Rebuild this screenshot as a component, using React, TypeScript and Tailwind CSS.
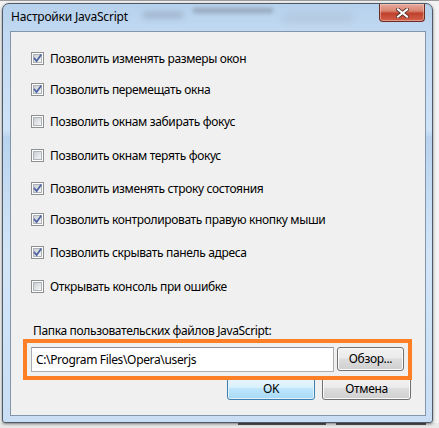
import React from "react";

const rows: { label: string; checked: boolean; cls: string }[] = [
  { label: "Позволить изменять размеры окон", checked: true, cls: "mt-[20px]" },
  { label: "Позволить перемещать окна", checked: true, cls: "mt-[18px]" },
  { label: "Позволить окнам забирать фокус", checked: false, cls: "mt-[19px]" },
  { label: "Позволить окнам терять фокус", checked: false, cls: "mt-[21px]" },
  { label: "Позволить изменять строку состояния", checked: true, cls: "mt-[20px]" },
  { label: "Позволить контролировать правую кнопку мыши", checked: true, cls: "mt-[18px]" },
  { label: "Позволить скрывать панель адреса", checked: true, cls: "mt-[20px]" },
  { label: "Открывать консоль при ошибке", checked: false, cls: "mt-[21px]" },
];

function Checkbox({ checked }: { checked: boolean }) {
  return (
    <div className="w-[13px] h-[13px] border border-[#8e8f8f] bg-white p-[1px] shrink-0">
      <div className="relative w-full h-full border border-[#aeb3b9] bg-gradient-to-br from-[#cbcfd5] to-[#f6f6f6]">
        {checked && (
          <svg viewBox="0 0 9 9" className="absolute -left-[1px] -top-[1px] w-[9px] h-[9px]">
            <path d="M1.5 4.5 L3.6 7 L7.8 1.2" fill="none" stroke="#4d62a0" strokeWidth="1.7" strokeLinecap="square" />
          </svg>
        )}
      </div>
    </div>
  );
}

function Btn({ label, def, cls }: { label: string; def?: boolean; cls: string }) {
  return (
    <div
      className={
        "h-[23px] rounded-[3px] border flex items-center justify-center text-[12px] text-black " +
        (def
          ? "border-[#3c7fb1] bg-[linear-gradient(#eaf6fd_0%,#d9f0fc_45%,#bee6fd_50%,#a7d9f5_100%)] shadow-[inset_0_0_0_1px_#e3f2fb] "
          : "border-[#707070] bg-[linear-gradient(#f2f2f2_0%,#ebebeb_45%,#dddddd_50%,#cfcfcf_100%)] shadow-[inset_0_0_0_1px_#fbfbfb] ") +
        cls
      }
    >
      {label}
    </div>
  );
}

export default function App() {
  return (
    <div
      className="relative w-[439px] h-[428px] overflow-hidden bg-[#f3f3f3] pt-[3px] pl-[2px]"
      style={{ fontFamily: '"Noto Sans", "Open Sans", sans-serif' }}
    >
      {/* background hints */}
      <div className="absolute left-0 top-0 w-[439px] h-[1px] bg-[#9a9a9a]" />
      <div className="absolute left-0 bottom-0 w-[439px] h-[5px] bg-[#e9e9e9]" />
      <div className="absolute left-[238px] bottom-[3px] w-[88px] h-[2px] bg-[#555]" />
      <div className="absolute left-[336px] bottom-[3px] w-[90px] h-[2px] bg-[#555]" />

      <div className="relative w-[431px] h-[420px] rounded-t-[7px] rounded-b-[3px] border border-[#4e5b69] bg-[linear-gradient(180deg,#b7d1ec_0%,#c3daf2_8%,#cfe3f7_30%,#b9d3ee_32%,#d3e6f8_60%,#c9def4_100%)] shadow-[0_1px_3px_rgba(0,0,0,0.5)] flex flex-col">
        {/* title bar blur */}
        <div className="absolute left-[140px] top-[8px] w-[40px] h-[6px] bg-[#8a9aae] blur-[3px] opacity-60" />
        <div className="absolute left-[190px] top-[4px] w-[80px] h-[5px] bg-[#7b8898] blur-[2px] opacity-60" />
        <div className="absolute left-[280px] top-[10px] w-[70px] h-[8px] bg-[#a6b8cc] blur-[4px] opacity-50" />

        <div className="relative h-[27px] flex items-start justify-between pl-[8px] pr-[7px] shrink-0">
          <span className="mt-[5px] text-[12px] leading-[16px] tracking-[-0.2px] text-black">Настройки JavaScript</span>
          <div className="w-[46px] h-[18px] rounded-b-[4px] border border-t-0 border-[#6b2a24] bg-[linear-gradient(180deg,#e9a99b_0%,#d98672_40%,#c0412c_55%,#d3604a_100%)] shadow-[inset_0_0_0_1px_rgba(255,220,210,0.45)] flex items-center justify-center">
            <svg viewBox="0 0 14 11" className="w-[13px] h-[10px]">
              <path d="M2 1.5 L12 9.5 M12 1.5 L2 9.5" stroke="#4a2a28" strokeWidth="4" strokeLinecap="square" />
              <path d="M2 1.5 L12 9.5 M12 1.5 L2 9.5" stroke="#ffffff" strokeWidth="2.2" strokeLinecap="square" />
            </svg>
          </div>
        </div>

        <div className="ml-[7px] w-[416px] h-[385px] border border-[#8295aa] bg-[#f0f0f0] flex flex-col text-[12px] tracking-[-0.35px] text-black">
          <div className="flex flex-col pl-[20px]">
            {rows.map((r, i) => (
              <div key={i} className={"flex items-center h-[13px] " + r.cls}>
                <Checkbox checked={r.checked} />
                <span className="ml-[6px] leading-[13px] whitespace-nowrap">{r.label}</span>
              </div>
            ))}
          </div>

          <div className="mt-[31px] pl-[22px] leading-[14px] whitespace-nowrap">
            Папка пользовательских файлов JavaScript:
          </div>

          <div className="relative mt-[9px] ml-[20px] w-[373px] h-[25px] flex items-stretch gap-[3px]">
            <div className="flex-1 h-[25px] border border-[#abadb3] border-t-[#8d9097] bg-white flex items-center pl-[4px] whitespace-nowrap">
              C:\Program Files\Opera\userjs
            </div>
            <Btn label="Обзор..." cls="w-[67px] h-[24px]" />
            <div className="absolute -left-[8px] -top-[8px] -right-[8px] -bottom-[8px] border-4 border-[#ff7f27] pointer-events-none z-10" />
          </div>

          <div className="mt-[5px] flex justify-end gap-[7px] pr-[14px]">
            <Btn label="OK" def cls="w-[88px]" />
            <Btn label="Отмена" cls="w-[89px]" />
          </div>
        </div>
      </div>
    </div>
  );
}
